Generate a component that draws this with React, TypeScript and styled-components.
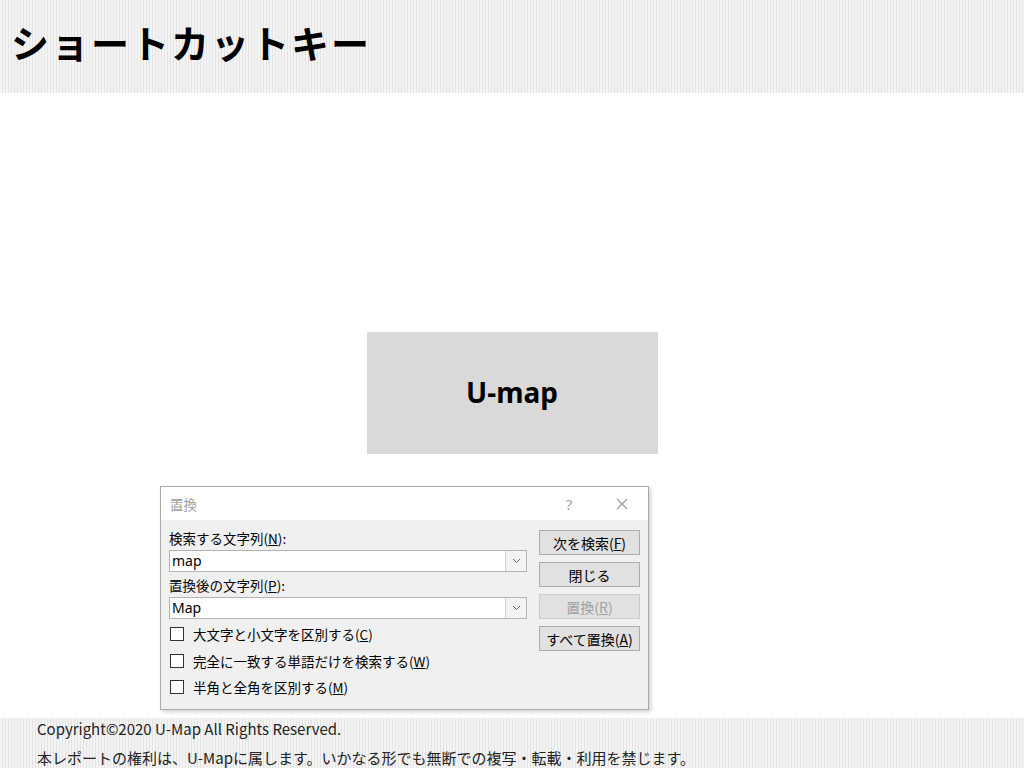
import styled, { createGlobalStyle } from 'styled-components';

const GlobalStyle = createGlobalStyle`
    body {
        margin: 0;
        font-family: "Noto Sans CJK JP", "Noto Sans", sans-serif;
        color: #000;
        background: #fff;
    }
`;

const stripes = `repeating-linear-gradient(90deg, #f4f4f4 0px, #f4f4f4 2px, #e4e4e4 2px, #e4e4e4 3px)`;

const Page = styled.div`
    height: 768px;
    display: flex;
    flex-direction: column;
    overflow: hidden;
`;

const Header = styled.header`
    height: 93px;
    flex-shrink: 0;
    display: flex;
    align-items: center;
    padding: 0 0 10px 11px;
    box-sizing: border-box;
    background: ${stripes};
`;

const Title = styled.h1`
    margin: 0;
    font-size: 38px;
    font-weight: 700;
    letter-spacing: 2px;
`;

const Main = styled.main`
    display: flex;
    flex-direction: column;
    padding-top: 239px;
`;

const LogoBox = styled.div`
    width: 291px;
    height: 122px;
    margin: 0 auto;
    background: #d9d9d9;
    display: flex;
    align-items: center;
    justify-content: center;
    font-family: "Noto Sans", "Liberation Sans", sans-serif;
    font-weight: 700;
    font-size: 28px;
    padding-bottom: 3px;
    box-sizing: border-box;
`;

const Dialog = styled.div`
    margin: 32px 0 0 160px;
    width: 489px;
    border: 1px solid #a9a9a9;
    box-sizing: border-box;
    background: #f0f0f0;
    box-shadow: 2px 2px 4px rgba(0, 0, 0, 0.18);
`;

const TitleBar = styled.div`
    height: 33px;
    background: #fff;
    display: flex;
    align-items: center;
    padding-left: 9px;
    font-size: 13.5px;
    color: #a0a0a0;
`;

const TitleText = styled.span`
    flex: 1;
`;

const TitleIcon = styled.span<{ $w: number }>`
    width: ${(p) => p.$w}px;
    display: flex;
    justify-content: center;
    font-size: 15px;
    color: #a8a8a8;
    font-family: "Noto Sans", sans-serif;
`;

const TitleSpacer = styled.span`
    width: 8px;
`;

const Body = styled.div`
    display: grid;
    grid-template-columns: 358px 101px;
    column-gap: 12px;
    padding: 7px 8px 8px 8px;
    font-size: 13.5px;
`;

const LeftCol = styled.div`
    display: flex;
    flex-direction: column;
`;

const Label = styled.div`
    line-height: 22px;
    height: 22px;
`;

const Combo = styled.div`
    height: 22px;
    border: 1px solid #b4b4b4;
    background: #fff;
    display: flex;
    box-sizing: border-box;
    margin-bottom: 2px;
    margin-top: 1px;
`;

const ComboValue = styled.div`
    flex: 1;
    padding-left: 2px;
    font-size: 14px;
    line-height: 20px;
    font-family: "Noto Sans", sans-serif;
`;

const ComboArrow = styled.div`
    width: 20px;
    border-left: 1px solid #cfcfcf;
    background: #f3f3f3;
    display: flex;
    align-items: center;
    justify-content: center;
`;

const CheckRow = styled.label`
    height: 26.5px;
    display: flex;
    align-items: center;
    gap: 9px;
`;

const Box = styled.span`
    width: 14px;
    height: 14px;
    border: 1px solid #333;
    background: #fff;
    box-sizing: border-box;
    margin-left: 1px;
`;

const RightCol = styled.div`
    display: flex;
    flex-direction: column;
    gap: 7px;
    padding-top: 3px;
`;

const Button = styled.div<{ $disabled?: boolean }>`
    height: 25px;
    border: 1px solid ${(p) => (p.$disabled ? '#cccccc' : '#adadad')};
    background: #e1e1e1;
    color: ${(p) => (p.$disabled ? '#a0a0a0' : '#000')};
    box-sizing: border-box;
    display: flex;
    align-items: center;
    justify-content: center;
    font-size: 14px;
`;

const Footer = styled.footer`
    margin-top: auto;
    height: 50px;
    box-sizing: border-box;
    background: ${stripes};
    padding: 2px 0 0 37px;
    font-size: 15px;
    color: #222;
`;

const FooterLine = styled.div`
    height: 18px;
    line-height: 18px;
    white-space: nowrap;
    & + & {
        margin-top: 11px;
    }
`;

const Chevron = () => (
    <svg width="9" height="6" viewBox="0 0 9 6">
        <path d="M1 1 L4.5 4.5 L8 1" fill="none" stroke="#606060" strokeWidth="1" />
    </svg>
);

const CloseIcon = () => (
    <svg width="12" height="12" viewBox="0 0 12 12">
        <path d="M1 1 L11 11 M11 1 L1 11" stroke="#9a9a9a" strokeWidth="1.1" />
    </svg>
);

const options = [
    { text: '大文字と小文字を区別する', key: 'C' },
    { text: '完全に一致する単語だけを検索する', key: 'W' },
    { text: '半角と全角を区別する', key: 'M' },
];

const App = () => {
    return (
        <Page>
            <GlobalStyle />
            <Header>
                <Title>ショートカットキー</Title>
            </Header>
            <Main>
                <LogoBox>U-map</LogoBox>
                <Dialog>
                    <TitleBar>
                        <TitleText>置換</TitleText>
                        <TitleIcon $w={70}>?</TitleIcon>
                        <TitleIcon $w={36}>
                            <CloseIcon />
                        </TitleIcon>
                        <TitleSpacer />
                    </TitleBar>
                    <Body>
                        <LeftCol>
                            <Label>
                                検索する文字列(<u>N</u>):
                            </Label>
                            <Combo>
                                <ComboValue>map</ComboValue>
                                <ComboArrow>
                                    <Chevron />
                                </ComboArrow>
                            </Combo>
                            <Label>
                                置換後の文字列(<u>P</u>):
                            </Label>
                            <Combo>
                                <ComboValue>Map</ComboValue>
                                <ComboArrow>
                                    <Chevron />
                                </ComboArrow>
                            </Combo>
                            {options.map((o) => (
                                <CheckRow key={o.key}>
                                    <Box />
                                    <span>
                                        {o.text}(<u>{o.key}</u>)
                                    </span>
                                </CheckRow>
                            ))}
                        </LeftCol>
                        <RightCol>
                            <Button>
                                次を検索(<u>F</u>)
                            </Button>
                            <Button>閉じる</Button>
                            <Button $disabled>
                                置換(<u>R</u>)
                            </Button>
                            <Button>
                                すべて置換(<u>A</u>)
                            </Button>
                        </RightCol>
                    </Body>
                </Dialog>
            </Main>
            <Footer>
                <FooterLine>Copyright©2020 U-Map All Rights Reserved.</FooterLine>
                <FooterLine>本レポートの権利は、U-Mapに属します。いかなる形でも無断での複写・転載・利用を禁じます。</FooterLine>
            </Footer>
        </Page>
    );
};

export default App;
